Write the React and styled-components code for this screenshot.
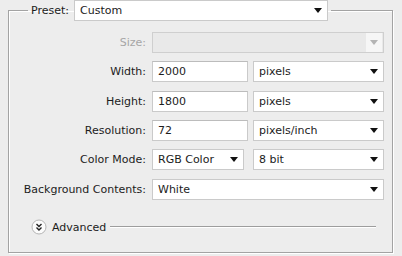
import React from "react";
import styled, { createGlobalStyle } from "styled-components";

const Global = createGlobalStyle`
  html, body { margin: 0; padding: 0; background: #ededed; }
  body { font-family: "DejaVu Sans", Verdana, sans-serif; font-size: 11px; color: #1c1c1c; }
`;

const Page = styled.div`
  width: 402px;
  height: 256px;
  box-sizing: border-box;
  padding: 0 9px 4px 8px;
  background: #ededed;
`;

const Frame = styled.fieldset`
  margin: 0;
  padding: 11px 8px 0 0;
  height: 253px;
  box-sizing: border-box;
  border: 1px solid #a3a3a3;
  box-shadow: 1px 1px 0 #ffffff, inset 1px 1px 0 #ffffff;
  display: flex;
  flex-direction: column;
`;

const Legend = styled.legend`
  margin-left: 19px;
  padding: 0 3px;
  display: flex;
  align-items: center;
  gap: 5px;
`;

const PresetLabel = styled.span`
  white-space: nowrap;
`;

const Form = styled.div`
  display: flex;
  flex-direction: column;
  gap: 8px;
`;

const Row = styled.div`
  display: grid;
  grid-template-columns: 137px 1fr;
  column-gap: 6px;
  align-items: center;
  height: 21px;
  margin-top: ${(p) => (p.$extra ? `${p.$extra}px` : "0")};
`;

const Label = styled.span`
  text-align: right;
  white-space: nowrap;
  color: ${(p) => (p.$disabled ? "#a6a6a6" : "#1c1c1c")};
`;

const Pair = styled.div`
  display: grid;
  grid-template-columns: ${(p) => p.$first}px 1fr;
  column-gap: ${(p) => p.$gap}px;
  height: 21px;
`;

const Field = styled.div`
  box-sizing: border-box;
  height: 21px;
  width: ${(p) => (p.$width ? `${p.$width}px` : "auto")};
  background: #ffffff;
  border: 1px solid #cacaca;
  border-top-color: #bcbcbc;
  padding: 0 5px;
  display: flex;
  align-items: center;
  white-space: nowrap;
`;

const Select = styled(Field)`
  justify-content: space-between;
  padding-right: 7px;
  background: ${(p) => (p.$disabled ? "#e9e9e9" : "#ffffff")};
  border-color: ${(p) => (p.$disabled ? "#cfcfcf" : "#cacaca")};
`;

const ArrowBox = styled.span`
  display: flex;
  align-items: center;
  justify-content: center;
  width: 16px;
  height: 19px;
  margin-right: -6px;
  background: ${(p) => (p.$disabled ? "#f6f6f6" : "transparent")};
`;

const Arrow = ({ disabled }) => (
  <ArrowBox $disabled={disabled}>
    <svg width="8" height="5" viewBox="0 0 8 5">
      <polygon points="0,0 8,0 4,5" fill={disabled ? "#b4b4b4" : "#111"} />
    </svg>
  </ArrowBox>
);

const Dropdown = ({ value, width, disabled }) => (
  <Select $width={width} $disabled={disabled}>
    <span>{value}</span>
    <Arrow disabled={disabled} />
  </Select>
);

const AdvancedRow = styled.div`
  display: flex;
  align-items: center;
  height: 16px;
  margin-top: 19px;
  padding-left: 22px;
  margin-right: 8px;
`;

const AdvIcon = styled.span`
  display: flex;
  width: 16px;
  height: 16px;
  margin-right: 5px;
`;

const AdvText = styled.span`
  white-space: nowrap;
  margin-right: 4px;
`;

const Rule = styled.div`
  flex: 1;
  height: 1px;
  background: #9d9d9d;
  box-shadow: 0 1px 0 #ffffff;
  margin-top: -1px;
`;

export default function App() {
  return (
    <>
      <Global />
      <Page>
        <Frame>
          <Legend>
            <PresetLabel>Preset:</PresetLabel>
            <Dropdown value="Custom" width={254} />
          </Legend>
          <Form>
            <Row>
              <Label $disabled>Size:</Label>
              <Dropdown value="" disabled />
            </Row>
            <Row>
              <Label>Width:</Label>
              <Pair $first={96} $gap={5}>
                <Field>2000</Field>
                <Dropdown value="pixels" />
              </Pair>
            </Row>
            <Row $extra={1}>
              <Label>Height:</Label>
              <Pair $first={96} $gap={5}>
                <Field>1800</Field>
                <Dropdown value="pixels" />
              </Pair>
            </Row>
            <Row>
              <Label>Resolution:</Label>
              <Pair $first={96} $gap={5}>
                <Field>72</Field>
                <Dropdown value="pixels/inch" />
              </Pair>
            </Row>
            <Row>
              <Label>Color Mode:</Label>
              <Pair $first={92} $gap={9}>
                <Dropdown value="RGB Color" />
                <Dropdown value="8 bit" />
              </Pair>
            </Row>
            <Row $extra={1}>
              <Label>Background Contents:</Label>
              <Dropdown value="White" />
            </Row>
          </Form>
          <AdvancedRow>
            <AdvIcon>
              <svg width="16" height="16" viewBox="0 0 16 16">
                <circle cx="8" cy="8" r="7" fill="#fbfbfb" stroke="#b5b5b5" />
                <polyline points="5.5,5 8,7.5 10.5,5" fill="none" stroke="#222" strokeWidth="1.4" />
                <polyline points="5.5,8.5 8,11 10.5,8.5" fill="none" stroke="#222" strokeWidth="1.4" />
              </svg>
            </AdvIcon>
            <AdvText>Advanced</AdvText>
            <Rule />
          </AdvancedRow>
        </Frame>
      </Page>
    </>
  );
}
